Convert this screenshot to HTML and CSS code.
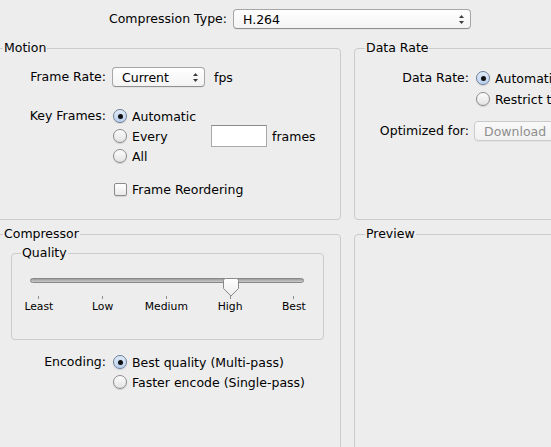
FILE: index.html
```html
<!DOCTYPE html>
<html>
<head>
<meta charset="utf-8">
<link rel="stylesheet" href="styles.css">
</head>
<body>
<div class="top">
  <div class="top-label">Compression Type:</div>
  <div class="popup popup-type"><span>H.264</span>
    <svg class="arrows" viewBox="0 0 7 11" width="7" height="11"><polygon points="3.5,1 6,4 1,4"/><polygon points="1,7 6,7 3.5,10"/></svg>
  </div>
</div>

<div class="panes">
  <fieldset class="box">
    <legend>Motion</legend>
    <div class="form motion">
      <div class="row">
        <div class="lbl">Frame Rate:</div>
        <div class="ctl">
          <div class="popup popup-rate"><span>Current</span>
            <svg class="arrows" viewBox="0 0 7 11" width="7" height="11"><polygon points="3.5,1 6,4 1,4"/><polygon points="1,7 6,7 3.5,10"/></svg>
          </div>
          <span class="unit">fps</span>
        </div>
      </div>
      <div class="row row-keys">
        <div class="lbl">Key Frames:</div>
        <div class="ctl options">
          <div class="opt"><span class="radio on"></span>Automatic</div>
          <div class="opt"><span class="opt-main"><span class="radio"></span>Every</span><span class="field"></span><span class="unit-frames">frames</span></div>
          <div class="opt"><span class="radio"></span>All</div>
        </div>
      </div>
      <div class="row row-check">
        <div class="lbl"></div>
        <div class="ctl">
          <div class="opt"><span class="check"></span>Frame Reordering</div>
        </div>
      </div>
    </div>
  </fieldset>

  <fieldset class="box">
    <legend>Data Rate</legend>
    <div class="form datarate">
      <div class="row">
        <div class="lbl">Data Rate:</div>
        <div class="ctl options tight">
          <div class="opt"><span class="radio on"></span>Automatic</div>
          <div class="opt"><span class="radio"></span>Restrict to</div>
        </div>
      </div>
      <div class="row row-opt">
        <div class="lbl">Optimized for:</div>
        <div class="ctl">
          <div class="popup popup-disabled"><span>Download</span></div>
        </div>
      </div>
    </div>
  </fieldset>

  <fieldset class="box">
    <legend>Compressor</legend>
    <fieldset class="quality">
      <legend>Quality</legend>
      <div class="slider">
        <div class="track"></div>
        <svg class="thumb" viewBox="0 0 16 19" width="16" height="19">
          <defs><linearGradient id="tg" x1="0" y1="0" x2="0" y2="1"><stop offset="0" stop-color="#ffffff"/><stop offset="1" stop-color="#ececec"/></linearGradient></defs>
          <path d="M2.5 0.5 H13.5 Q15.5 0.5 15.5 2.5 V10.5 L8 18 L0.5 10.5 V2.5 Q0.5 0.5 2.5 0.5 Z" fill="url(#tg)" stroke="#8a8a8a" stroke-width="1"/>
        </svg>
      </div>
      <div class="scale ticks"><i></i><i></i><i></i><i></i><i></i></div>
      <div class="scale labels"><span>Least</span><span>Low</span><span>Medium</span><span>High</span><span>Best</span></div>
    </fieldset>
    <div class="form encoding">
      <div class="row">
        <div class="lbl">Encoding:</div>
        <div class="ctl options">
          <div class="opt"><span class="radio on"></span>Best quality (Multi-pass)</div>
          <div class="opt"><span class="radio"></span>Faster encode (Single-pass)</div>
        </div>
      </div>
    </div>
  </fieldset>

  <fieldset class="box">
    <legend>Preview</legend>
  </fieldset>
</div>
</body>
</html>
```

FILE: styles.css
```css
html, body {
  margin: 0;
  padding: 0;
  overflow: hidden;
  width: 551px;
  height: 447px;
}
body {
  background: #ededed;
  font-family: "DejaVu Sans", "Liberation Sans", sans-serif;
  font-size: 12.5px;
  color: #000;
}

/* top row */
.top {
  display: flex;
  align-items: center;
  padding-top: 9px;
  height: 20px;
}
.top-label {
  width: 227px;
  text-align: right;
  margin-right: 6px;
  line-height: 20px;
}

/* popups */
.popup {
  box-sizing: border-box;
  height: 20px;
  display: flex;
  align-items: center;
  justify-content: space-between;
  padding: 0 5px 0 9px;
  border: 1px solid #a6a6a6;
  border-bottom-color: #909090;
  border-radius: 4px;
  background: linear-gradient(#ffffff, #f3f3f3);
  box-shadow: 0 1px 0 rgba(0, 0, 0, 0.04);
}
.popup .arrows { fill: #3c3c3c; flex: none; }
.popup-type { width: 238px; }
.popup-rate { width: 93px; }
.popup-disabled {
  width: 120px;
  margin-left: -1px;
  color: #8e8e8e;
  border-color: #cbcbcb;
  background: linear-gradient(#f8f8f8, #f1f1f1);
}

/* panes grid */
.panes {
  display: grid;
  grid-template-columns: 349px 246px;
  grid-template-rows: 180px 240px;
  column-gap: 13px;
  row-gap: 6px;
  margin-top: 11px;
  margin-left: -8px;
}
.box, .quality {
  box-sizing: border-box;
  margin: 0;
  padding: 0;
  min-width: 0;
  border: 1px solid #cbcbcb;
  border-radius: 4px;
}
.box { height: 100%; }
.box > legend, .quality > legend {
  padding: 0 1px;
  margin-left: 10px;
  line-height: 16px;
}

/* forms */
.row {
  display: flex;
  align-items: flex-start;
}
.lbl {
  flex: none;
  text-align: right;
  line-height: 20px;
  margin-right: 6px;
  white-space: nowrap;
}
.ctl {
  display: flex;
  align-items: center;
  height: 20px;
  white-space: nowrap;
}
.ctl.options {
  flex-direction: column;
  align-items: flex-start;
  height: auto;
}
.ctl.options.tight { gap: 1px; }

.motion { padding-top: 11px; }
.motion .lbl, .encoding .lbl { width: 113px; }
.row-keys { margin-top: 19px; }
.row-check { margin-top: 13px; }

.datarate { padding-top: 12px; }
.datarate .lbl { width: 114px; }
.row-opt { margin-top: 12px; }

.unit { margin-left: 9px; }

.opt {
  display: flex;
  align-items: center;
  height: 20px;
  white-space: nowrap;
}
.opt-main {
  display: flex;
  align-items: center;
  width: 99px;
}
.field {
  box-sizing: border-box;
  width: 56px;
  height: 22px;
  background: #fff;
  border: 1px solid #a9a9a9;
  border-top-color: #8a8a8a;
}
.unit-frames { margin-left: 5px; }

/* radio & checkbox */
.radio {
  box-sizing: border-box;
  flex: none;
  width: 14px;
  height: 14px;
  margin: 0 5px 0 1px;
  border-radius: 50%;
  border: 1px solid #8b8b8b;
  background: linear-gradient(#fdfdfd, #e3e3e3);
  box-shadow: 0 1px 1px rgba(0, 0, 0, 0.12);
  display: flex;
  align-items: center;
  justify-content: center;
}
.radio.on {
  border-color: #6a7d99;
  background: radial-gradient(circle at 50% 75%, #b5cdee 0%, #d3e1f4 55%, #ecf2fa 100%);
}
.radio.on::after {
  content: "";
  width: 5px;
  height: 5px;
  border-radius: 50%;
  background: #111;
}
.check {
  box-sizing: border-box;
  flex: none;
  width: 13px;
  height: 13px;
  margin: 0 5px 0 2px;
  border: 1px solid #8b8b8b;
  border-radius: 2px;
  background: linear-gradient(#ffffff, #eaeaea);
  box-shadow: 0 1px 1px rgba(0, 0, 0, 0.1);
}

/* compressor */
.quality {
  margin: 3px 0 0 18px;
  width: 313px;
  height: 95px;
}
.quality > legend { margin-left: 9px; }
.slider {
  position: relative;
  width: 274px;
  height: 18px;
  margin: 17px 0 0 18px;
}
.track {
  box-sizing: border-box;
  height: 5px;
  margin-top: 3px;
  border: 1px solid #888;
  border-radius: 3px;
  background: linear-gradient(#9c9c9c, #cbcbcb);
}
.thumb {
  position: absolute;
  left: 193px;
  top: 0;
}
.scale {
  display: grid;
  grid-template-columns: repeat(5, 63.75px);
  margin-left: -5px;
  justify-items: center;
}
.ticks { height: 3px; }
.ticks i {
  display: block;
  width: 1px;
  height: 3px;
  background: #8e8e8e;
}
.labels {
  margin-top: 1px;
  font-size: 10.8px;
  line-height: 13px;
}
.encoding { margin-top: 12px; }
```
